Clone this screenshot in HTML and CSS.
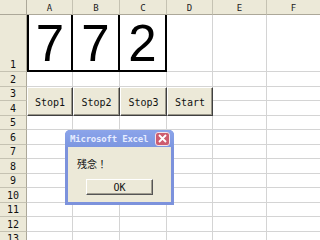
FILE: index.html
```html
<!DOCTYPE html>
<html>
<head>
<meta charset="utf-8">
<link rel="stylesheet" href="styles.css">
</head>
<body>
<div class="screen">
  <div class="sheet">
    <div class="corner"></div><div class="h">A</div><div class="h">B</div><div class="h">C</div><div class="h">D</div><div class="h">E</div><div class="h">F</div>

    <div class="r">1</div><div class="c big first">7</div><div class="c big">7</div><div class="c big">2</div><div class="c"></div><div class="c"></div><div class="c"></div>

    <div class="r">2</div><div class="c"></div><div class="c"></div><div class="c"></div><div class="c"></div><div class="c"></div><div class="c"></div>

    <div class="r">3</div><div class="btn">Stop1</div><div class="btn">Stop2</div><div class="btn">Stop3</div><div class="btn">Start</div><div class="c"></div><div class="c"></div>

    <div class="r">4</div><div class="c"></div><div class="c"></div>

    <div class="r">5</div><div class="c"></div><div class="c"></div><div class="c"></div><div class="c"></div><div class="c"></div><div class="c"></div>
    <div class="r">6</div><div class="c"></div><div class="c"></div><div class="c"></div><div class="c"></div><div class="c"></div><div class="c"></div>
    <div class="r">7</div><div class="c"></div><div class="c"></div><div class="c"></div><div class="c"></div><div class="c"></div><div class="c"></div>
    <div class="r">8</div><div class="c"></div><div class="c"></div><div class="c"></div><div class="c"></div><div class="c"></div><div class="c"></div>
    <div class="r">9</div><div class="c"></div><div class="c"></div><div class="c"></div><div class="c"></div><div class="c"></div><div class="c"></div>
    <div class="r">10</div><div class="c"></div><div class="c"></div><div class="c"></div><div class="c"></div><div class="c"></div><div class="c"></div>
    <div class="r">11</div><div class="c"></div><div class="c"></div><div class="c"></div><div class="c"></div><div class="c"></div><div class="c"></div>
    <div class="r">12</div><div class="c"></div><div class="c"></div><div class="c"></div><div class="c"></div><div class="c"></div><div class="c"></div>
    <div class="r">13</div><div class="c"></div><div class="c"></div><div class="c"></div><div class="c"></div><div class="c"></div><div class="c"></div>
  </div>

  <div class="dialog">
    <div class="titlebar">
      <span class="title">Microsoft Excel</span>
      <span class="close"><svg width="9" height="9" viewBox="0 0 9 9"><path d="M1 1 L8 8 M8 1 L1 8" stroke="#fff" stroke-width="1.8" fill="none"/></svg></span>
    </div>
    <div class="dbody">
      <div class="msg">残念！</div>
      <div class="okrow"><div class="ok">OK</div></div>
    </div>
  </div>
</div>
</body>
</html>
```

FILE: styles.css
```css
* { box-sizing: border-box; }
html, body { margin: 0; padding: 0; background: #fff; }
.screen {
  position: relative;
  width: 320px;
  height: 240px;
  overflow: hidden;
  background: #fff;
}
.sheet {
  display: grid;
  grid-template-columns: 27px 46px 47px 47px 46px 54px 54px;
  grid-template-rows: 15px 57px 15px 14px 15px 14px 15px 14px 15px 14px 15px 14px 15px 14px;
  font-family: "DejaVu Sans Mono", "Liberation Mono", monospace;
}
.corner {
  background: #ece9d8;
  border-right: 1px solid #aca899;
  border-bottom: 1px solid #aca899;
}
.h {
  background: #ece9d8;
  border-right: 1px solid #c5c2b2;
  border-bottom: 1px solid #aca899;
  font-size: 9px;
  color: #222;
  display: flex;
  align-items: center;
  justify-content: center;
  padding-top: 1px;
}
.r {
  background: #ece9d8;
  border-right: 1px solid #aca899;
  border-bottom: 1px solid #c5c2b2;
  font-size: 10px;
  color: #111;
  display: flex;
  align-items: flex-end;
  justify-content: center;
  line-height: 13px;
}
.c {
  border-right: 1px solid #d4d4d4;
  border-bottom: 1px solid #d4d4d4;
}
.big {
  border-right: 2px solid #000;
  border-bottom: 2px solid #000;
  font-family: "Liberation Sans", Arial, sans-serif;
  font-size: 51px;
  line-height: 1;
  display: flex;
  align-items: flex-end;
  justify-content: center;
  padding-bottom: 1px;
  color: #000;
}
.first { border-left: 2px solid #000; }
.btn {
  grid-row: span 2;
  background: #ece9d8;
  border-top: 1px solid #fff;
  border-left: 1px solid #fff;
  border-right: 1px solid #404040;
  border-bottom: 1px solid #404040;
  box-shadow: inset -1px -1px 0 #9a978a;
  font-size: 10px;
  color: #111;
  display: flex;
  align-items: center;
  justify-content: center;
  padding-top: 1px;
}
.dialog {
  position: absolute;
  left: 65px;
  top: 130px;
  width: 109px;
  height: 75px;
  background: #7c92dc;
  border-radius: 5px 5px 0 0;
  padding: 0 3px 3px 3px;
  display: flex;
  flex-direction: column;
}
.titlebar {
  height: 17px;
  display: flex;
  align-items: center;
  justify-content: space-between;
  background: linear-gradient(#8ba4ea, #7c96e0);
  margin: 0 -3px;
  padding: 0 4px 0 5px;
  border-radius: 5px 5px 0 0;
}
.title {
  font-family: "DejaVu Sans Mono", monospace;
  font-weight: bold;
  font-size: 9px;
  letter-spacing: -0.2px;
  color: #e6ecff;
}
.close {
  width: 15px;
  height: 14px;
  background: #cd5c6f;
  border: 1px solid #f2e4ea;
  border-radius: 3px;
  display: flex;
  align-items: center;
  justify-content: center;
}
.dbody {
  flex: 1;
  background: #ece9d8;
  display: flex;
  flex-direction: column;
}
.msg {
  font-family: "Noto Sans CJK JP", sans-serif;
  font-size: 10px;
  color: #111;
  padding: 10px 0 0 9px;
  line-height: 14px;
}
.okrow {
  display: flex;
  justify-content: center;
  margin-top: 8px;
}
.ok {
  width: 67px;
  height: 16px;
  background: #ece9d8;
  border-top: 1px solid #fff;
  border-left: 1px solid #fff;
  border-right: 1px solid #555;
  border-bottom: 1px solid #555;
  box-shadow: inset -1px -1px 0 #a09d90;
  font-family: "DejaVu Sans Mono", monospace;
  font-size: 10px;
  color: #111;
  display: flex;
  align-items: center;
  justify-content: center;
}
```
